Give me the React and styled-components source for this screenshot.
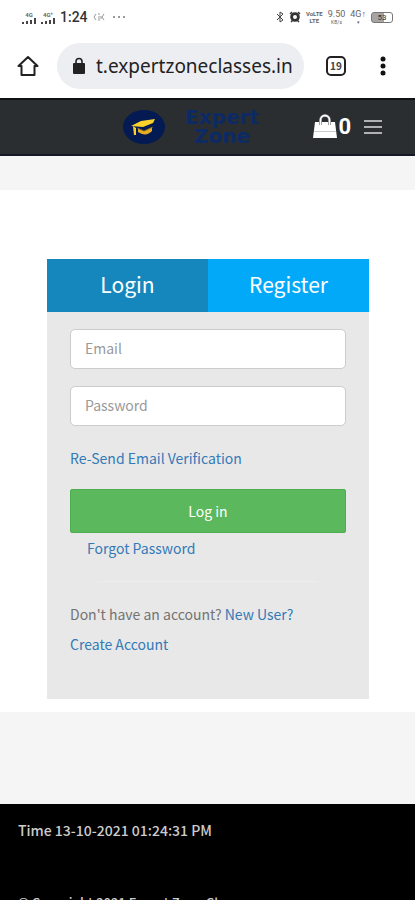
import React from "react";
import styled, { createGlobalStyle } from "styled-components";

const App = () => {
  return (
    <>
      <GlobalStyle />
      <Screen>
        <StatusBar>
          <StatusGroup>
            <StackedText>
              <b>4G</b>
              <SignalIcon />
            </StackedText>
            <StackedText>
              <b>4G⁺</b>
              <SignalIcon />
            </StackedText>
            <Clock>1:24</Clock>
            <VibrateIcon />
            <MoreIcon />
          </StatusGroup>
          <StatusGroup>
            <BluetoothIcon />
            <AlarmIcon />
            <StackedText>
              <b>VoLTE</b>
              <b>LTE</b>
            </StackedText>
            <StackedText $large>
              <span>9.50</span>
              <small>KB/s</small>
            </StackedText>
            <StackedText $large>
              <span>4G↑</span>
              <small>▾</small>
            </StackedText>
            <Battery>53</Battery>
          </StatusGroup>
        </StatusBar>

        <BrowserBar>
          <IconButton type="button" aria-label="Home">
            <HomeIcon />
          </IconButton>
          <AddressBar>
            <LockIcon />
            <AddressInput
              type="text"
              aria-label="Address"
              defaultValue="t.expertzoneclasses.in"
            />
          </AddressBar>
          <TabsButton type="button" aria-label="Open tabs">
            19
          </TabsButton>
          <IconButton type="button" aria-label="Menu">
            <DotsIcon />
          </IconButton>
        </BrowserBar>

        <SiteHeader>
          <Brand href="#">
            <LogoIcon />
            <BrandName>
              Expert
              <br />
              Zone
            </BrandName>
          </Brand>
          <HeaderActions>
            <CartLink href="#" aria-label="Cart">
              <BagIcon />
              <CartCount>0</CartCount>
            </CartLink>
            <IconButton type="button" aria-label="Navigation">
              <BarsIcon />
            </IconButton>
          </HeaderActions>
        </SiteHeader>

        <Main>
          <Card>
            <Tabs>
              <Tab type="button" $active>
                Login
              </Tab>
              <Tab type="button">Register</Tab>
            </Tabs>
            <LoginForm onSubmit={(e) => e.preventDefault()}>
              <FormInput
                type="email"
                id="email"
                aria-label="Email"
                placeholder="Email"
              />
              <FormInput
                type="password"
                id="password"
                aria-label="Password"
                placeholder="Password"
              />
              <TextLink href="#">Re-Send Email Verification</TextLink>
              <LoginButton type="submit">Log in</LoginButton>
              <ForgotRow>
                <TextLink href="#">Forgot Password</TextLink>
              </ForgotRow>
              <Divider />
              <NoAccount>
                Don't have an account? <TextLink href="#">New User?</TextLink>
                <br />
                <TextLink href="#">Create Account</TextLink>
              </NoAccount>
            </LoginForm>
          </Card>
        </Main>

        <Footer>
          <FooterText>Time 13-10-2021 01:24:31 PM</FooterText>
          <Copyright>© Copyright 2021 Expert Zone Classes</Copyright>
        </Footer>
      </Screen>
    </>
  );
};

const SignalIcon = () => (
  <svg width="14" height="6" viewBox="0 0 14 6" fill="#444" aria-hidden="true">
    <path d="M0 4h2v2H0zM4 3h2v3H4zM8 2h2v4H8zM12 0h2v6h-2z" />
  </svg>
);

const VibrateIcon = () => (
  <svg width="14" height="12" viewBox="0 0 14 12" fill="none" stroke="#999" aria-hidden="true">
    <path d="M3 3L1 6l2 3M6 2v2M6 5v5M8 5v3M11 3l-2 3 2 3" />
  </svg>
);

const MoreIcon = () => (
  <svg width="14" height="12" viewBox="0 0 14 12" fill="#777" aria-hidden="true">
    <circle cx="2" cy="6" r="1" />
    <circle cx="7" cy="6" r="1" />
    <circle cx="12" cy="6" r="1" />
  </svg>
);

const BluetoothIcon = () => (
  <svg width="8" height="12" viewBox="0 0 8 12" fill="none" stroke="#444" aria-hidden="true">
    <path d="M1 3l6 6-3 2V1l3 2-6 6" />
  </svg>
);

const AlarmIcon = () => (
  <svg width="12" height="12" viewBox="0 0 12 12" fill="none" stroke="#333" aria-hidden="true">
    <circle cx="6" cy="6" r="3.4" strokeWidth="2.8" />
    <path d="M1 3l2-2M11 3L9 1M2 11l2-2M10 11L8 9" strokeWidth="1.4" />
  </svg>
);

const HomeIcon = () => (
  <svg width="22" height="22" viewBox="0 0 22 22" fill="none" stroke="#222" strokeWidth="2" aria-hidden="true">
    <path d="M1.5 11L11 2l9.5 9H17.500v9h-13v-9z" strokeLinejoin="round" />
  </svg>
);

const LockIcon = () => (
  <svg width="14" height="18" viewBox="0 0 14 18" aria-hidden="true">
    <rect x="1" y="6" width="12" height="11" rx="1" fill="#222" />
    <path d="M4 7V4.500a3 3 0 0 1 6 0V7" fill="none" stroke="#222" strokeWidth="1.600" />
  </svg>
);

const DotsIcon = () => (
  <svg width="22" height="22" viewBox="0 0 22 22" fill="#111" aria-hidden="true">
    <circle cx="11" cy="4" r="2.500" />
    <circle cx="11" cy="11" r="2.500" />
    <circle cx="11" cy="18" r="2.500" />
  </svg>
);

const LogoIcon = () => (
  <svg width="42" height="34" viewBox="0 0 42 34" aria-hidden="true">
    <ellipse cx="21" cy="17" rx="21" ry="17" fill="#041a52" />
    <path d="M8 16l10-5 14-2-2 4-10 4z" fill="#fbd22b" />
    <path d="M15 18l6 3 8-4v4c-3 3-6 4-10 3l-4-2z" fill="#e3ae22" />
    <path d="M10 16l3 2v7h-2z" fill="#fbd22b" />
    <path d="M14 18l7 3 9-4" fill="none" stroke="#7a6420" strokeWidth="0.800" />
  </svg>
);

const BagIcon = () => (
  <svg width="26" height="26" viewBox="0 0 26 26" aria-hidden="true">
    <path d="M3 8h20l2 16H1z" fill="#fff" />
    <path d="M8.500 11V6a4.500 4.500 0 0 1 9 0v5" fill="none" stroke="#666" strokeWidth="3" />
    <path d="M8.500 11V6a4.500 4.500 0 0 1 9 0v5" fill="none" stroke="#fff" strokeWidth="1.800" />
    <path d="M2 17.500h22" stroke="#ccc" />
  </svg>
);

const BarsIcon = () => (
  <svg width="18" height="14" viewBox="0 0 18 14" fill="none" stroke="#ddd" strokeWidth="1.600" aria-hidden="true">
    <path d="M0 1h18M0 7h18M0 13h18" />
  </svg>
);

const GlobalStyle = createGlobalStyle`
  body {
    margin: 0;
    overflow-x: hidden;
  }

  *, *::before, *::after {
    box-sizing: border-box;
  }

  button, input {
    font-family: inherit;
  }

  svg {
    display: block;
    flex-shrink: 0;
  }
`;

const Screen = styled.div`
  height: 100vh;
  overflow: hidden;
  display: flex;
  flex-direction: column;
  background-color: #f5f5f5;
  color: #737373;
  font-family: "Noto Sans CJK SC", "Open Sans", sans-serif;
  font-size: 14px;

  & > * {
    flex-shrink: 0;
  }
`;

const StatusBar = styled.div`
  display: flex;
  justify-content: space-between;
  align-items: center;
  height: 34px;
  padding: 0 22px;
  background-color: #ffffff;
`;

const StatusGroup = styled.div`
  display: flex;
  align-items: center;
  gap: 5px;
`;

const StackedText = styled.span`
  display: flex;
  flex-direction: column;
  align-items: center;
  color: #666666;
  font-family: Roboto, sans-serif;
  font-size: ${(props) => (props.$large ? "9px" : "6px")};
  line-height: ${(props) => (props.$large ? "10px" : "7px")};

  small {
    font-size: 5px;
    line-height: 6px;
  }
`;

const Clock = styled.span`
  color: #333333;
  font-family: Roboto, sans-serif;
  font-size: 14px;
  font-weight: 500;
  line-height: 16px;
`;

const Battery = styled.span`
  width: 22px;
  height: 11px;
  border: 1px solid #777777;
  border-radius: 3px;
  background: linear-gradient(to right, #a5a5a5 60%, #ffffff 60%);
  color: #333333;
  font-family: Roboto, sans-serif;
  font-size: 8px;
  line-height: 9px;
  text-align: center;
`;

const BrowserBar = styled.div`
  display: flex;
  align-items: center;
  height: 64px;
  padding: 0 21px 0 17px;
  background-color: #ffffff;
`;

const IconButton = styled.button`
  display: flex;
  align-items: center;
  justify-content: center;
  padding: 0;
  border: none;
  background: none;
  cursor: pointer;
`;

const AddressBar = styled.div`
  display: flex;
  flex: 1;
  align-items: center;
  gap: 10px;
  min-width: 0;
  height: 46px;
  margin: 0 22px 0 18px;
  padding: 0 8px 0 15px;
  border-radius: 23px;
  background-color: #edeef2;
`;

const AddressInput = styled.input`
  flex: 1;
  min-width: 0;
  padding: 0;
  border: none;
  outline: none;
  background: none;
  color: #222222;
  font-family: "Noto Sans", sans-serif;
  font-size: 19px;
  line-height: 26px;
`;

const TabsButton = styled.button`
  width: 20px;
  height: 20px;
  margin-right: 26px;
  padding: 0;
  border: 2px solid #222222;
  border-radius: 5px;
  background: none;
  color: #444444;
  font-size: 10px;
  font-weight: bold;
  line-height: 16px;
`;

const SiteHeader = styled.header`
  display: flex;
  align-items: center;
  justify-content: space-between;
  height: 58px;
  padding: 0 33px 0 123px;
  border-top: 2px solid #0f1316;
  border-bottom: 2px solid #141827;
  background-color: #2a2e31;
`;

const Brand = styled.a`
  display: flex;
  align-items: center;
  gap: 20px;
  text-decoration: none;
`;

const BrandName = styled.span`
  color: #0c2a66;
  font-family: "DejaVu Sans", sans-serif;
  font-size: 20px;
  font-weight: bold;
  line-height: 19px;
  text-align: center;
`;

const HeaderActions = styled.div`
  display: flex;
  align-items: center;
  gap: 13px;
`;

const CartLink = styled.a`
  display: flex;
  align-items: center;
  color: #ffffff;
  text-decoration: none;
`;

const CartCount = styled.span`
  font-family: Roboto, sans-serif;
  font-size: 22px;
  font-weight: bold;
  line-height: 24px;
`;

const Main = styled.main`
  margin-top: 34px;
  padding: 69px 46px 13px 47px;
  background-color: #ffffff;
`;

const Card = styled.section`
  background-color: #e8e8e8;
`;

const Tabs = styled.div`
  display: flex;
`;

const Tab = styled.button`
  flex: 1;
  height: 53px;
  padding: 0 0 3px;
  border: none;
  background-color: ${(props) => (props.$active ? "#1587bd" : "#02a9f9")};
  color: #ffffff;
  font-size: 21px;
  line-height: 32px;
  cursor: pointer;
`;

const LoginForm = styled.form`
  display: flex;
  flex-direction: column;
  padding: 17px 23px 40px;
  line-height: 30px;
`;

const FormInput = styled.input`
  width: 100%;
  height: 40px;
  margin-bottom: 17px;
  padding: 0 14px 2px;
  border: 1px solid #cccccc;
  border-radius: 5px;
  background-color: #ffffff;
  color: #555555;
  font-size: 14px;

  &::placeholder {
    color: #999999;
    opacity: 1;
  }
`;

const TextLink = styled.a`
  color: #337ab7;
  text-decoration: none;
`;

const LoginButton = styled.button`
  height: 44px;
  margin-top: 16px;
  border: 1px solid #4cae4c;
  border-radius: 2px;
  background-color: #5cb85c;
  color: #ffffff;
  font-size: 14px;
  cursor: pointer;
`;

const ForgotRow = styled.div`
  padding-left: 17px;
`;

const Divider = styled.hr`
  width: 80%;
  margin: 18px auto 17px;
  border: none;
  border-top: 1px solid #eeeeee;
`;

const NoAccount = styled.p`
  margin: 0;
`;

const Footer = styled.footer`
  margin-top: 92px;
  padding: 11px 18px;
  background-color: #000000;
  color: #cccccc;
`;

const FooterText = styled.p`
  margin: 0;
  font-weight: 500;
  line-height: 30px;
`;

const Copyright = styled.p`
  margin: 44px 0 0;
  font-size: 13px;
  font-weight: 500;
  line-height: 28px;
`;

export default App;
